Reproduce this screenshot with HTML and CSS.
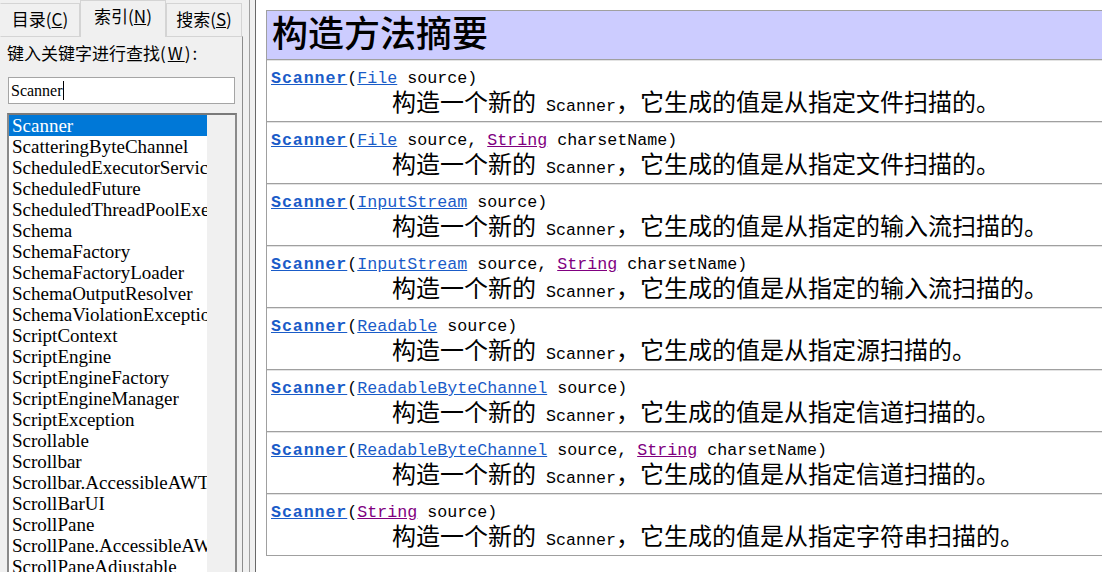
FILE: index.html
```html
<!DOCTYPE html>
<html lang="zh-CN">
<head>
<meta charset="utf-8">
<title>Scanner</title>
<link rel="stylesheet" href="styles.css">
</head>
<body>
<div class="app">
  <aside class="sidebar">
    <div class="tabs">
      <div class="tab tab-toc">目录(<u>C</u>)</div>
      <div class="tab tab-index active">索引(<u>N</u>)</div>
      <div class="tab tab-search">搜索(<u>S</u>)</div>
    </div>
    <div class="panel">
      <div class="label">键入关键字进行查找<span class="key">(<u>W</u>):</span></div>
      <div class="input">Scanner<span class="caret"></span></div>
      <div class="listbox">
        <ul class="items">
          <li class="selected">Scanner</li>
          <li>ScatteringByteChannel</li>
          <li>ScheduledExecutorService</li>
          <li>ScheduledFuture</li>
          <li>ScheduledThreadPoolExecutor</li>
          <li>Schema</li>
          <li>SchemaFactory</li>
          <li>SchemaFactoryLoader</li>
          <li>SchemaOutputResolver</li>
          <li>SchemaViolationException</li>
          <li>ScriptContext</li>
          <li>ScriptEngine</li>
          <li>ScriptEngineFactory</li>
          <li>ScriptEngineManager</li>
          <li>ScriptException</li>
          <li>Scrollable</li>
          <li>Scrollbar</li>
          <li>Scrollbar.AccessibleAWTScrollBar</li>
          <li>ScrollBarUI</li>
          <li>ScrollPane</li>
          <li>ScrollPane.AccessibleAWTScrollPane</li>
          <li>ScrollPaneAdjustable</li>
          <li>ScrollPaneConstants</li>
        </ul>
        <div class="vscroll"></div>
      </div>
    </div>
  </aside>
  <div class="gap"></div>
  <div class="frame">
    <main class="page">
      <table class="summary">
        <tr><th class="heading">构造方法摘要</th></tr>
        <tr><td>
          <div class="sig"><a class="ctor" href="#">Scanner</a>(<a href="#">File</a> source)</div>
          <div class="desc">构造一个新的<span class="m"> Scanner</span>，它生成的值是从指定文件扫描的。</div>
        </td></tr>
        <tr><td>
          <div class="sig"><a class="ctor" href="#">Scanner</a>(<a href="#">File</a> source, <a class="visited" href="#">String</a> charsetName)</div>
          <div class="desc">构造一个新的<span class="m"> Scanner</span>，它生成的值是从指定文件扫描的。</div>
        </td></tr>
        <tr><td>
          <div class="sig"><a class="ctor" href="#">Scanner</a>(<a href="#">InputStream</a> source)</div>
          <div class="desc">构造一个新的<span class="m"> Scanner</span>，它生成的值是从指定的输入流扫描的。</div>
        </td></tr>
        <tr><td>
          <div class="sig"><a class="ctor" href="#">Scanner</a>(<a href="#">InputStream</a> source, <a class="visited" href="#">String</a> charsetName)</div>
          <div class="desc">构造一个新的<span class="m"> Scanner</span>，它生成的值是从指定的输入流扫描的。</div>
        </td></tr>
        <tr><td>
          <div class="sig"><a class="ctor" href="#">Scanner</a>(<a href="#">Readable</a> source)</div>
          <div class="desc">构造一个新的<span class="m"> Scanner</span>，它生成的值是从指定源扫描的。</div>
        </td></tr>
        <tr><td>
          <div class="sig"><a class="ctor" href="#">Scanner</a>(<a href="#">ReadableByteChannel</a> source)</div>
          <div class="desc">构造一个新的<span class="m"> Scanner</span>，它生成的值是从指定信道扫描的。</div>
        </td></tr>
        <tr><td>
          <div class="sig"><a class="ctor" href="#">Scanner</a>(<a href="#">ReadableByteChannel</a> source, <a class="visited" href="#">String</a> charsetName)</div>
          <div class="desc">构造一个新的<span class="m"> Scanner</span>，它生成的值是从指定信道扫描的。</div>
        </td></tr>
        <tr><td>
          <div class="sig"><a class="ctor" href="#">Scanner</a>(<a class="visited" href="#">String</a> source)</div>
          <div class="desc">构造一个新的<span class="m"> Scanner</span>，它生成的值是从指定字符串扫描的。</div>
        </td></tr>
      </table>
    </main>
  </div>
</div>
</body>
</html>
```
FILE: styles.css
```css
* { box-sizing: border-box; }
html, body { margin: 0; padding: 0; }
body {
  width: 1102px;
  height: 572px;
  overflow: hidden;
  background: #f0f0f0;
  font-family: "Noto Sans CJK SC", sans-serif;
  color: #000;
}
.app { display: flex; height: 572px; }

/* ---------- sidebar ---------- */
.sidebar {
  width: 243px;
  flex: none;
  display: flex;
  flex-direction: column;
  overflow: hidden;
}
.tabs {
  display: flex;
  align-items: flex-end;
  height: 36px;
  position: relative;
  z-index: 1;
}
.tab {
  height: 33px;
  border: 1px solid #d4d4d4;
  border-bottom: none;
  background: #f0f0f0;
  font-size: 17px;
  line-height: 30px;
  text-align: center;
  white-space: nowrap;
}
.tab-toc { width: 80px; border-left-color: #f0f0f0; }
.tab-index { width: 86px; }
.tab-search { width: 76px; }
.tab.active {
  height: 37px;
  margin-bottom: -1px;
  background: #f0f0f0;
}
.panel {
  flex: 1;
  display: flex;
  flex-direction: column;
  border-top: 1px solid #d4d4d4;
  border-left: 1px solid #f0f0f0;
  border-right: 1px solid #8c8c8c;
  padding: 4px 0 0 6px;
  min-height: 0;
}
.label {
  font-size: 17px;
  line-height: 24px;
  height: 24px;
  white-space: nowrap;
}
.label .key { letter-spacing: 2px; }
.input {
  margin: 12px 0 0 1px;
  width: 227px;
  height: 27px;
  flex: none;
  border: 1px solid #a5a5a5;
  background: #fff;
  padding-left: 2px;
  font-family: "Liberation Serif", serif;
  font-size: 16px;
  line-height: 25px;
}
.caret {
  display: inline-block;
  width: 1px;
  height: 19px;
  background: #000;
  vertical-align: -4px;
}
.listbox {
  margin-top: 9px;
  width: 230px;
  height: 500px;
  flex: none;
  display: flex;
  border: 2px solid #8a8a8a;
  border-top-color: #7a7a7a;
  background: #f0f0f0;
}
.items {
  list-style: none;
  margin: 0;
  padding: 0;
  width: 198px;
  flex: none;
  background: #fff;
  overflow: hidden;
  font-family: "Liberation Serif", serif;
  font-size: 19px;
  line-height: 21px;
}
.items li {
  padding-left: 3px;
  white-space: nowrap;
  overflow: hidden;
}
.items li.selected { background: #0078d7; color: #fff; }
.vscroll { flex: 1; background: #f0f0f0; }

/* ---------- splitter & frame ---------- */
.gap { width: 6px; flex: none; }
.frame {
  flex: 1;
  display: flex;
  border-left: 1px solid #a0a0a0;
  padding-left: 5px;
  background: #f0f0f0;
  min-width: 0;
}
.page {
  flex: 1;
  min-width: 0;
  background: #fff;
  border-left: 1px solid #696969;
  padding: 10px 0 0 10px;
  overflow: hidden;
}

/* ---------- summary table ---------- */
.summary {
  width: 900px;
  border-collapse: separate;
  border-spacing: 0;
  border: 1px solid #a0a0a0;
}
.heading {
  background: #ccccff;
  text-align: left;
  font-weight: 500;
  font-size: 36px;
  line-height: 40px;
  padding: 0 5px 8px;
  border-bottom: 1px solid #a0a0a0;
  white-space: nowrap;
}
.summary td {
  border-top: 1px solid #e3e3e3;
  border-bottom: 1px solid #a0a0a0;
  padding: 7px 4px 10px;
}
.summary tr:last-child td { border-bottom: none; }
.sig {
  font-family: "Liberation Mono", monospace;
  font-size: 16.67px;
  line-height: 22px;
  white-space: nowrap;
}
.sig a { color: #1a5cc8; text-decoration: underline; }
.sig a.visited { color: #800080; }
.sig a.ctor { font-weight: 700; letter-spacing: 0.9px; }
.desc {
  padding-left: 121px;
  font-size: 24px;
  line-height: 21px;
  white-space: nowrap;
}
.desc .m {
  font-family: "Liberation Mono", monospace;
  font-size: 16.67px;
  line-height: 0;
}
```
